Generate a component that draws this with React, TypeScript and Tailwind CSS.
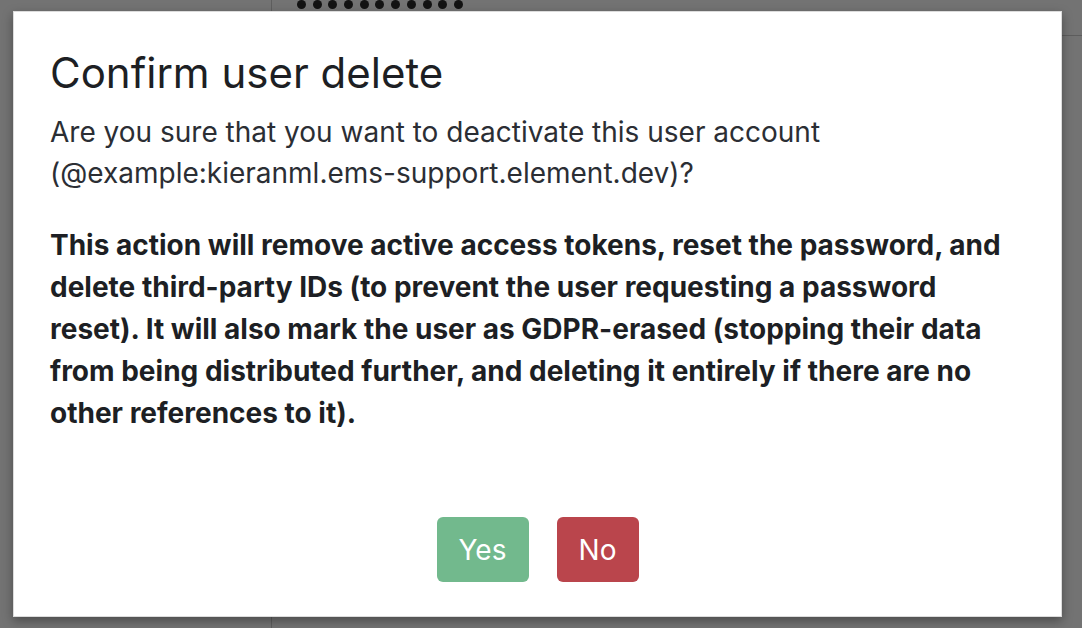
import React from "react";

const dots = Array.from({ length: 11 });

const App: React.FC = () => {
  return (
    <div
      className="relative h-[628px] w-[1082px] overflow-hidden bg-white"
      style={{ fontFamily: "Inter, 'Noto Sans', sans-serif" }}
    >
      {/* page behind the modal */}
      <div className="flex h-full">
        <div className="w-[272px] border-r border-[#d0d0d0]" />
        <div className="flex-1">
          <div className="flex h-[12px] items-start gap-[6.7px] pl-[25px]">
            {dots.map((_, i) => (
              <span key={i} className="block h-[9px] w-[9px] rounded-full bg-[#2a2a2a]" />
            ))}
          </div>
          <div className="mt-[23px] border-b border-[#cfcfcf]" />
        </div>
      </div>

      {/* backdrop + dialog */}
      <div className="absolute inset-0 bg-black/55">
        <div className="pl-[13px] pt-[11px]">
          <div className="flex h-[606px] w-[1049px] flex-col border border-[#dcdcdc] bg-white px-[36px] pt-[36px] pb-[34px] shadow-[0_4px_10px_rgba(0,0,0,0.35)]">
            <h1 className="text-[42px] leading-[50px] font-normal text-[#1d1f24]">
              Confirm user delete
            </h1>
            <p className="mt-[14px] text-[28px] leading-[41px] text-[#2b2e34]">
              Are you sure that you want to deactivate this user account
              (@example:kieranml.ems-support.element.dev)?
            </p>
            <p className="mt-[30px] text-[28px] leading-[42px] font-bold text-[#1d1f24]">
              This action will remove active access tokens, reset the password,
              and delete third-party IDs (to prevent the user requesting a
              password reset). It will also mark the user as GDPR-erased
              (stopping their data from being distributed further, and deleting
              it entirely if there are no other references to it).
            </p>
            <div className="mt-auto flex justify-center gap-[28px]">
              <button className="h-[65px] w-[92px] rounded-[6px] bg-[#72b98d] text-[28px] text-white">
                Yes
              </button>
              <button className="h-[65px] w-[82px] rounded-[6px] bg-[#ba454c] text-[28px] text-white">
                No
              </button>
            </div>
          </div>
        </div>
      </div>
    </div>
  );
};

export default App;
